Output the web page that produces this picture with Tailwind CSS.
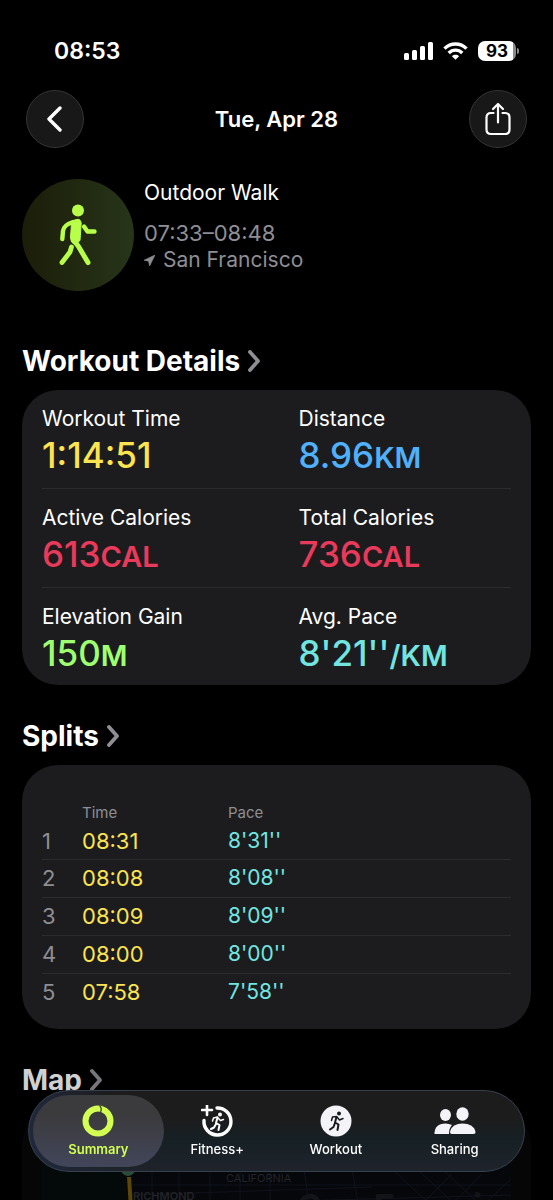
<!DOCTYPE html>
<html lang="en">
<head>
    <meta charset="UTF-8">
    <meta name="viewport" content="width=device-width, initial-scale=1.0">
    <title>Outdoor Walk</title>
    <script src="https://cdn.jsdelivr.net/npm/@tailwindcss/browser@4"></script>
</head>
<body class="bg-black text-white font-['Inter',sans-serif]">
    <div class="h-screen flex flex-col overflow-hidden">

        <!-- status bar -->
        <div class="shrink-0 flex items-center justify-between pt-[37px] pl-[54px] pr-[34px]">
            <span class="text-[23px] leading-7 font-semibold">08:53</span>
            <div class="flex items-center gap-[10px]">
                <svg class="w-[29px] h-[18px]" viewBox="0 0 29 18" fill="#fff">
                    <rect x="0" y="11" width="5" height="7" rx="1.5"/>
                    <rect x="8" y="8" width="5" height="10" rx="1.5"/>
                    <rect x="16" y="4" width="5" height="14" rx="1.5"/>
                    <rect x="24" y="0" width="5" height="18" rx="1.5"/>
                </svg>
                <svg class="w-[25px] h-[18px]" viewBox="0 0 25 18" fill="none" stroke="#fff" stroke-width="3.4">
                    <path d="M1.5 6.6C7.6 0.4 17.4 0.4 23.5 6.6"/>
                    <path d="M5.7 11C9.5 7.2 15.5 7.2 19.3 11"/>
                    <path d="M12.500 17.800L8.900 14.200C11 12.300 14 12.300 16.100 14.200Z" fill="#fff" stroke="none"/>
                </svg>
                <div class="flex items-center">
                    <div class="w-[38px] h-5 rounded-[7px] bg-linear-to-r from-white from-92% to-[#8a8a8a] to-92% text-black text-[17px] leading-5 font-bold text-center">93</div>
                    <div class="w-[2px] h-[6px] ml-px rounded-r-full bg-[#8a8a8a]"></div>
                </div>
            </div>
        </div>

        <!-- title bar -->
        <header class="shrink-0 flex items-center justify-between mt-[25px] px-[26px]">
            <button aria-label="Back" class="size-[58px] rounded-full bg-[#181818] border border-[#343434] flex items-center justify-center">
                <svg class="w-4 h-[26px] mr-[3px]" viewBox="0 0 16 26" fill="none" stroke="#fff" stroke-width="3.4" stroke-linecap="round" stroke-linejoin="round">
                    <path d="M14 2L3 13L14 24"/>
                </svg>
            </button>
            <h1 class="text-[22px] leading-7 font-semibold">Tue, Apr 28</h1>
            <button aria-label="Share" class="size-[58px] rounded-full bg-[#181818] border border-[#343434] flex items-center justify-center">
                <svg class="w-[26px] h-[34px]" viewBox="0 0 26 34" fill="none" stroke="#fff" stroke-width="2.2" stroke-linecap="round" stroke-linejoin="round">
                    <path d="M8.500 11H6Q1.500 11 1.500 15.500V27.500Q1.500 32 6 32H20Q24.500 32 24.500 27.500V15.500Q24.500 11 20 11H17.500"/>
                    <path d="M13 20.500V2.500M8 7L13 2L18 7"/>
                </svg>
            </button>
        </header>

        <main class="grow min-h-0 flex flex-col px-[22px]">
            <section class="shrink-0 flex gap-[10px] mt-[31px]">
                <div class="size-[112px] rounded-full bg-linear-to-r from-[#1b1d08] to-[#27351a] flex items-center justify-center">
                    <svg class="w-[38px] h-[62px]" viewBox="0 0 38 62" fill="none" stroke="#b8ff4a" stroke-linecap="round" stroke-linejoin="round">
                        <circle cx="19" cy="6.500" r="6" fill="#b8ff4a" stroke="none"/>
                        <path d="M14.500 16.500Q21.500 13 22.200 19L21 36.500L16 41Q11 38 11.500 33L12.500 20Z" fill="#b8ff4a" stroke-width="1"/>
                        <path d="M14 18Q4.500 21 4 27L3.300 35" stroke-width="4.400"/>
                        <path d="M25 22.500L28.500 27.500H35.500" stroke-width="4.400"/>
                        <path d="M15 37Q18 40 19.500 42.500L29 58.500" stroke-width="5"/>
                        <path d="M12.500 43L11 48L3 58.500" stroke-width="4.800"/>
                    </svg>
                </div>
                <div class="text-[21px] leading-7 text-[#8e8e93]">
                    <h2 class="text-white">Outdoor Walk</h2>
                    <p class="mt-3 text-[22px]">07:33–08:48</p>
                    <p class="flex items-center gap-2 -mt-px">
                        <svg class="size-[11px]" viewBox="0 0 11 11" fill="#8e8e93"><path d="M11 0L0 5.200L4.600 6.200L5.600 11Z" stroke="#8e8e93" stroke-width="0.6" stroke-linejoin="round"/></svg>
                        San Francisco
                    </p>
                </div>
            </section>

            <section class="shrink-0 mt-[52px]">
                <h2 class="text-[28px] leading-9 font-bold">
                    <a href="#details" class="inline-flex items-center gap-2">Workout Details
                        <svg class="w-3 h-[22px]" viewBox="0 0 12 22" fill="none" stroke="#8e8e93" stroke-width="3.800" stroke-linecap="round" stroke-linejoin="round"><path d="M2 2L10 11L2 20"/></svg>
                    </a>
                </h2>
                <dl class="mt-[11px] px-5 rounded-[36px] bg-[#1c1c1e] text-[21px] leading-7">
                    <div class="grid grid-cols-2 gap-x-11 h-[99px] pt-[15px] border-b border-[#2c2c2e]">
                        <div>
                            <dt>Workout Time</dt>
                            <dd class="text-[35px] leading-11 font-medium text-[#fbe44f]">1:14:51</dd>
                        </div>
                        <div>
                            <dt>Distance</dt>
                            <dd class="text-[35px] leading-11 font-medium text-[#50b0fa]">8.96<span class="text-[29px] font-semibold">KM</span></dd>
                        </div>
                    </div>
                    <div class="grid grid-cols-2 gap-x-11 h-[99px] pt-[15px] border-b border-[#2c2c2e]">
                        <div>
                            <dt>Active Calories</dt>
                            <dd class="text-[35px] leading-11 font-medium text-[#e93a5b]">613<span class="text-[29px] font-semibold">CAL</span></dd>
                        </div>
                        <div>
                            <dt>Total Calories</dt>
                            <dd class="text-[35px] leading-11 font-medium text-[#e93a5b]">736<span class="text-[29px] font-semibold">CAL</span></dd>
                        </div>
                    </div>
                    <div class="grid grid-cols-2 gap-x-11 h-[97px] pt-[15px]">
                        <div>
                            <dt>Elevation Gain</dt>
                            <dd class="text-[35px] leading-11 font-medium text-[#9eff70]">150<span class="text-[29px] font-semibold">M</span></dd>
                        </div>
                        <div>
                            <dt>Avg. Pace</dt>
                            <dd class="text-[35px] leading-11 font-medium text-[#72e5e0]">8'21''<span class="text-[29px] font-semibold">/KM</span></dd>
                        </div>
                    </div>
                </dl>
            </section>

            <section class="shrink-0 mt-[33px]">
                <h2 class="text-[28px] leading-9 font-bold">
                    <a href="#splits" class="inline-flex items-center gap-2">Splits
                        <svg class="w-3 h-[22px]" viewBox="0 0 12 22" fill="none" stroke="#8e8e93" stroke-width="3.800" stroke-linecap="round" stroke-linejoin="round"><path d="M2 2L10 11L2 20"/></svg>
                    </a>
                </h2>
                <div class="mt-[11px] px-5 pt-[37px] pb-[18px] rounded-[36px] bg-[#1c1c1e]">
                    <table class="w-full table-fixed text-[22px] leading-7 text-left">
                        <thead>
                            <tr class="h-[21px] text-[15px] leading-5 text-[#8e8e93]">
                                <th class="w-10"></th>
                                <th class="w-[146px] font-normal">Time</th>
                                <th class="font-normal">Pace</th>
                            </tr>
                        </thead>
                        <tbody class="divide-y divide-[#2c2c2e]">
                            <tr class="h-9">
                                <td class="text-[#8e8e93]">1</td>
                                <td class="text-[#fbe44f]">08:31</td>
                                <td class="text-[21px] text-[#72e5e0]">8'31''</td>
                            </tr>
                            <tr class="h-[38px]">
                                <td class="text-[#8e8e93]">2</td>
                                <td class="text-[#fbe44f]">08:08</td>
                                <td class="text-[21px] text-[#72e5e0]">8'08''</td>
                            </tr>
                            <tr class="h-[38px]">
                                <td class="text-[#8e8e93]">3</td>
                                <td class="text-[#fbe44f]">08:09</td>
                                <td class="text-[21px] text-[#72e5e0]">8'09''</td>
                            </tr>
                            <tr class="h-[38px]">
                                <td class="text-[#8e8e93]">4</td>
                                <td class="text-[#fbe44f]">08:00</td>
                                <td class="text-[21px] text-[#72e5e0]">8'00''</td>
                            </tr>
                            <tr class="h-[38px]">
                                <td class="text-[#8e8e93]">5</td>
                                <td class="text-[#fbe44f]">07:58</td>
                                <td class="text-[21px] text-[#72e5e0]">7'58''</td>
                            </tr>
                        </tbody>
                    </table>
                </div>
            </section>

            <section class="grow min-h-0 flex flex-col mt-[33px]">
                <h2 class="text-[28px] leading-9 font-bold text-[#d0d0d0]">
                    <a href="#map" class="inline-flex items-center gap-2">Map
                        <svg class="w-3 h-[22px]" viewBox="0 0 12 22" fill="none" stroke="#77777b" stroke-width="3.800" stroke-linecap="round" stroke-linejoin="round"><path d="M2 2L10 11L2 20"/></svg>
                    </a>
                </h2>
                <div class="grow mt-[11px] px-5 pt-5 rounded-t-[36px] bg-[#060607] overflow-hidden">
                    <svg class="w-full h-24" viewBox="0 0 469 96" preserveAspectRatio="xMinYMin slice">
                        <rect width="469" height="96" fill="#05070b"/>
                        <rect width="90" height="96" fill="#04090a"/>
                        <g stroke="#10131c" stroke-width="1" fill="none">
                            <path d="M90 56H469M90 66L330 58M110 76L469 66M60 87L469 78"/>
                            <path d="M110 40V96M137 40V96M168 40V96M198 40V96M228 40V96M262 40L270 96M310 40L320 96"/>
                            <path d="M350 40L410 96M375 40L435 96M400 40L460 96M469 50L420 96M440 45L390 96M410 45L365 90"/>
                        </g>
                        <path d="M87 48L90 96" stroke="#5c4709" stroke-width="4"/>
                        <circle cx="86" cy="40" r="7" fill="#2c4a38"/>
                        <g class="font-['Inter',sans-serif]" fill="#222327" font-size="11">
                            <text x="91" y="71" font-weight="600">RICHMOND</text>
                            <text x="184" y="53">CALIFORNIA</text>
                        </g>
                        <text class="font-['Inter',sans-serif]" x="256" y="91" fill="#121418" font-size="36" font-weight="700">San Francisco</text>
                    </svg>
                </div>
            </section>
        </main>
    </div>

    <!-- tab bar -->
    <nav class="fixed inset-x-7 bottom-7 h-[82px] py-1 px-[10px] grid grid-cols-4 rounded-full border border-[#37414c] bg-[linear-gradient(to_right,#20283c,transparent_16%),linear-gradient(to_bottom,#1c1c1d_35%,#162024_60%,#1f232b)] text-[13px] leading-4 font-medium">
        <a href="#summary" class="-mx-[6px] rounded-full bg-linear-to-b from-[#3b3a3c] from-25% to-[#42465a] flex flex-col items-center pt-[10px] gap-1 text-[#d2ff52] font-semibold">
            <svg class="size-8" viewBox="0 0 32 32" fill="none">
                <circle cx="16" cy="16" r="12.500" stroke="#d2ff52" stroke-width="6"/>
                <path d="M17.500 0.500Q20.500 3.500 18.500 7" stroke="#3b3f33" stroke-width="1.300"/>
            </svg>
            Summary
        </a>
        <a href="#fitness" class="flex flex-col items-center pt-[10px] gap-1">
            <svg class="size-8" viewBox="0 0 32 32" fill="none" stroke="#fff" stroke-linecap="round" stroke-linejoin="round">
                <path d="M16 3A13.500 13.500 0 1 1 3 15.500" stroke-width="3.400"/>
                <path d="M6 0V10M1 5H11" stroke-width="2.600"/>
                <circle cx="19" cy="9.500" r="2" fill="#fff" stroke="none"/>
                <path d="M16.500 12.500L15 18L18.500 20L17.500 25M15 19L13 22.500L10 24" stroke-width="2"/>
                <path d="M16.500 12L12.500 13L11.500 16M17 13L19.500 15.500L22.500 14.500" stroke-width="1.500"/>
            </svg>
            Fitness+
        </a>
        <a href="#workout" class="flex flex-col items-center pt-[10px] gap-1">
            <svg class="size-8" viewBox="0 0 32 32" fill="none" stroke="#17191c" stroke-linecap="round" stroke-linejoin="round">
                <circle cx="16" cy="16" r="15.500" fill="#f4f4f8" stroke="none"/>
                <circle cx="19" cy="8.500" r="2" fill="#17191c" stroke="none"/>
                <path d="M16.500 12L15 17.500L18.500 19.500L17.500 25M15 18L13.500 22L10 24.500" stroke-width="2"/>
                <path d="M16.500 11.500L12.500 12L11.500 15.500M17 12L19.500 15L23 13.500" stroke-width="1.500"/>
            </svg>
            Workout
        </a>
        <a href="#sharing" class="flex flex-col items-center pt-[10px] gap-1">
            <svg class="w-[42px] h-8" viewBox="0 0 42 32" fill="#f4f4f8">
                <ellipse cx="11.500" cy="10" rx="5.500" ry="6"/>
                <path d="M0.500 29Q0.500 18.500 11.500 18.500Q15 18.500 18 20Q15 23 15 29Z"/>
                <ellipse cx="28.500" cy="9" rx="6.200" ry="6.800"/>
                <path d="M18 29Q15.500 29 16.200 26Q18.500 18.500 28.500 18.500Q39 18.500 41.300 26Q42 29 39.500 29Z"/>
            </svg>
            Sharing
        </a>
    </nav>
</body>
</html>
